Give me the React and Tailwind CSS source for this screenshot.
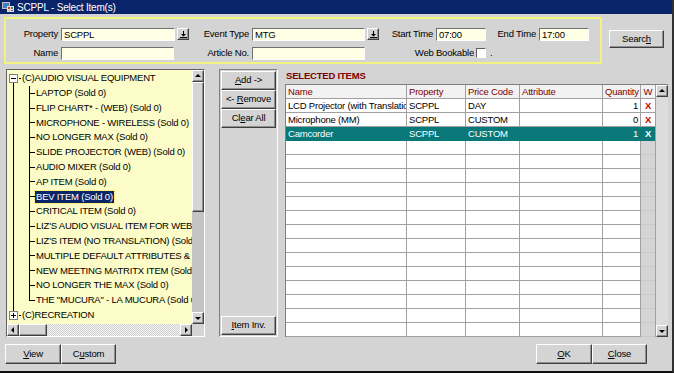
const FONT = 'font-["Liberation_Sans",Arial,sans-serif] tracking-[-0.2px]';

const children = [
  'LAPTOP (Sold 0)',
  'FLIP CHART* - (WEB) (Sold 0)',
  'MICROPHONE - WIRELESS (Sold 0)',
  'NO LONGER MAX (Sold 0)',
  'SLIDE PROJECTOR (WEB) (Sold 0)',
  'AUDIO MIXER (Sold 0)',
  'AP ITEM (Sold 0)',
  'BEV ITEM (Sold 0)',
  'CRITICAL ITEM (Sold 0)',
  "LIZ'S AUDIO VISUAL ITEM FOR WEB (Sold 0)",
  "LIZ'S ITEM (NO TRANSLATION) (Sold 0)",
  'MULTIPLE DEFAULT ATTRIBUTES & RATES (Sold 0)',
  'NEW MEETING MATRITX ITEM (Sold 0)',
  'NO LONGER THE MAX (Sold 0)',
  'THE "MUCURA" - LA MUCURA (Sold 0)',
];

const cols = [
  { key: 'name', label: 'Name', w: 'w-[121px]' },
  { key: 'prop', label: 'Property', w: 'w-[59px]' },
  { key: 'code', label: 'Price Code', w: 'w-[54px]' },
  { key: 'attr', label: 'Attribute', w: 'w-[83px]' },
  { key: 'qty', label: 'Quantity', w: 'w-[38px]', right: true },
];

const items = [
  { name: 'LCD Projector (with Translation)', prop: 'SCPPL', code: 'DAY', attr: '', qty: '1' },
  { name: 'Microphone (MM)', prop: 'SCPPL', code: 'CUSTOM', attr: '', qty: '0' },
  { name: 'Camcorder', prop: 'SCPPL', code: 'CUSTOM', attr: '', qty: '1', selected: true },
];

const raised =
  'border border-t-white border-l-white border-r-[#404040] border-b-[#404040] shadow-[inset_-1px_-1px_0_#909090] bg-[#d4d4d4]';

const Field = ({ w, value }) => (
  <div
    className={`${w} h-[13px] bg-[#ffffe6] border border-t-[#707070] border-l-[#707070] border-r-white border-b-white pl-[2px] leading-[11px] text-black whitespace-nowrap overflow-hidden`}
  >
    {value}
  </div>
);

const DropBtn = () => (
  <div className={`w-[12px] h-[12px] ${raised} flex items-center justify-center`}>
    <svg width="7" height="7" viewBox="0 0 7 7">
      <path d="M3 0h1v3h2L3.5 5.5 1 3h2z" fill="#000" />
      <rect x="0" y="6" width="7" height="1" fill="#000" />
    </svg>
  </div>
);

const Btn = ({ className = '', children }) => (
  <div className={`${raised} flex items-center justify-center text-black ${className}`}>{children}</div>
);

const Arrow = ({ dir }) => {
  const paths = {
    up: 'M1 5h6L4 2z',
    down: 'M1 3h6L4 6z',
    left: 'M5 1v6L2 4z',
    right: 'M3 1v6l3-3z',
  };
  return (
    <div className={`w-[12px] h-[12px] shrink-0 ${raised} flex items-center justify-center`}>
      <svg width="8" height="8" viewBox="0 0 8 8">
        <path d={paths[dir]} fill="#000" />
      </svg>
    </div>
  );
};

const Box = ({ open }) => (
  <div className="w-[9px] h-[9px] border border-[#808080] bg-white flex items-center justify-center shrink-0">
    <svg width="7" height="7" viewBox="0 0 7 7">
      <rect x="1" y="3" width="5" height="1" fill="#000" />
      {!open && <rect x="3" y="1" width="1" height="5" fill="#000" />}
    </svg>
  </div>
);

const Tree = () => (
  <div className="w-[199px] h-[268px] border border-t-[#606060] border-l-[#606060] border-r-white border-b-white shadow-[inset_1px_1px_0_#000] flex flex-col">
    <div className="flex flex-1 min-h-0">
      <div className="flex-1 min-w-0 bg-[#fcfcc8] overflow-hidden pl-[1px] pt-[1px]">
        <div className="flex h-[14.8px] items-stretch">
          <div className="w-[11px] flex flex-col items-center">
            <div className="flex-1" />
            <Box open />
            <div className="flex-1 w-px bg-black" />
          </div>
          <div className="w-[2px] self-center h-px bg-black" />
          <span className="pl-[1px] leading-[14.8px] whitespace-nowrap">(C)AUDIO VISUAL EQUIPMENT</span>
        </div>
        {children.map((c, i) => {
          const last = i === children.length - 1;
          return (
            <div key={c} className="flex h-[14.8px] items-stretch">
              <div className="w-[5px] shrink-0" />
              <div className="w-[16px] shrink-0 border-l border-black" />
              <div className="w-[6px] shrink-0 flex flex-col">
                <div className="flex-1 border-l border-b border-black" />
                <div className={`flex-1 ${last ? '' : 'border-l border-black'}`} />
              </div>
              <div className="flex items-center whitespace-nowrap">
                {c === 'BEV ITEM (Sold 0)' ? (
                  <span className="bg-[#0a246a] text-white px-[1px] leading-[12px] outline outline-1 outline-dotted outline-[#f0e060]">
                    {c}
                  </span>
                ) : (
                  <span className="pl-[1px]">{c}</span>
                )}
              </div>
            </div>
          );
        })}
        <div className="flex h-[14.8px] items-stretch">
          <div className="w-[11px] flex flex-col items-center">
            <div className="flex-1 w-px bg-black" />
            <Box />
            <div className="flex-1" />
          </div>
          <div className="w-[2px] self-center h-px bg-black" />
          <span className="pl-[1px] leading-[14.8px] whitespace-nowrap">(C)RECREATION</span>
        </div>
      </div>
      <div className="w-[12px] flex flex-col bg-[#c4c4c4]">
        <Arrow dir="up" />
        <div className={`h-[130px] ${raised}`} />
        <div className="flex-1" />
        <Arrow dir="down" />
      </div>
    </div>
    <div className="flex h-[12px]">
      <div className="flex-1 flex bg-[#e6e6e6] bg-[repeating-conic-gradient(#d0d0d0_0_25%,#f4f4f4_0_50%)] bg-[length:2px_2px]">
        <Arrow dir="left" />
        <div className={`w-[28px] ${raised}`} />
        <div className="flex-1" />
        <Arrow dir="right" />
      </div>
      <div className="w-[12px] bg-[#d4d4d4]" />
    </div>
  </div>
);

const Table = () => {
  const rows = [...items];
  while (rows.length < 17) rows.push(null);
  return (
    <div className="flex border-t border-l border-[#808080] h-[253px]">
      <div className="w-[369px] flex flex-col">
        <div className="flex h-[14px] bg-[#f2f2f2]">
          {cols.map((c) => (
            <div key={c.key} className={`${c.w} shrink-0 border-r border-b border-[#a0a0a0] px-[2px] text-[#800000] leading-[13px] whitespace-nowrap overflow-hidden`}>
              {c.label}
            </div>
          ))}
          <div className="w-[14px] border-b border-[#a0a0a0] text-[#800000] text-center leading-[13px]">W</div>
        </div>
        {rows.map((r, i) => (
          <div key={i} className={`flex h-[14px] ${r && r.selected ? 'bg-[#087878] text-white' : 'bg-white text-black'}`}>
            {cols.map((c) => (
              <div
                key={c.key}
                className={`${c.w} shrink-0 border-r border-b ${r && r.selected ? 'border-[#087878]' : 'border-[#a0a0a0]'} px-[2px] leading-[13px] whitespace-nowrap overflow-hidden ${c.right ? 'text-right' : ''}`}
              >
                {r ? r[c.key] : ''}
              </div>
            ))}
            <div
              className={`w-[14px] border-b ${r ? (r.selected ? 'border-[#087878] text-white' : 'border-[#a0a0a0] text-[#c00000]') : 'bg-[#d4d4d4] border-[#c8c8c8]'} text-center font-bold leading-[13px]`}
            >
              {r ? 'X' : ''}
            </div>
          </div>
        ))}
      </div>
      <div className="w-[13px] flex flex-col bg-[#dcdcdc] border-l border-[#a0a0a0]">
        <Arrow dir="up" />
        <div className="flex-1" />
        <Arrow dir="down" />
      </div>
    </div>
  );
};

export default function App() {
  return (
    <div className={`${FONT} text-[9.5px] text-black w-[674px] h-[373px] bg-[#d4d4d4] border-r-2 border-b-2 border-r-[#303030] border-b-[#101010] overflow-hidden`}>
      {/* title bar */}
      <div className="h-[14px] bg-[#0a246a] flex items-center pl-[2px] gap-[2px] text-white text-[10px]">
        <svg width="13" height="12" viewBox="0 0 13 12">
          <rect x="0" y="1" width="8" height="7" fill="#c0c0c0" />
          <rect x="1" y="2" width="6" height="5" fill="#4080c0" />
          <rect x="5" y="5" width="7" height="6" fill="#e0e0e0" />
          <rect x="6" y="6" width="2" height="2" fill="#e03030" />
          <rect x="9" y="6" width="2" height="2" fill="#30a030" />
          <rect x="6" y="9" width="2" height="1" fill="#e0c020" />
          <rect x="9" y="9" width="2" height="1" fill="#8040c0" />
        </svg>
        <span>SCPPL - Select Item(s)</span>
      </div>

      {/* filter area */}
      <div className="flex items-start mt-[3px]">
        <div className="ml-[4px] w-[598px] h-[47px] border-2 border-[#f2f280] pt-[8px] flex flex-col gap-[5px]">
          <div className="flex items-center">
            <span className="w-[52px] text-right">Property</span>
            <div className="ml-[3px]"><Field w="w-[114px]" value="SCPPL" /></div>
            <div className="ml-[2px]"><DropBtn /></div>
            <span className="w-[60px] text-right">Event Type</span>
            <div className="ml-[3px]"><Field w="w-[113px]" value="MTG" /></div>
            <div className="ml-[2px]"><DropBtn /></div>
            <span className="w-[54px] text-right">Start Time</span>
            <div className="ml-[3px]"><Field w="w-[50px]" value="07:00" /></div>
            <span className="w-[50px] text-right">End Time</span>
            <div className="ml-[3px]"><Field w="w-[50px]" value="17:00" /></div>
          </div>
          <div className="flex items-center">
            <span className="w-[52px] text-right">Name</span>
            <div className="ml-[3px]"><Field w="w-[113px]" value="" /></div>
            <span className="w-[75px] text-right">Article No.</span>
            <div className="ml-[3px]"><Field w="w-[113px]" value="" /></div>
            <span className="w-[109px] text-right">Web Bookable</span>
            <div className="ml-[2px] w-[10px] h-[10px] bg-white border border-t-[#606060] border-l-[#606060] border-r-white border-b-white" />
            <span className="ml-[4px]">.</span>
          </div>
        </div>
        <Btn className="ml-[7px] mt-[13px] w-[55px] h-[18px]">
          <span>
            Searc<span className="underline">h</span>
          </span>
        </Btn>
      </div>

      {/* main area */}
      <div className="flex mt-[5px] h-[268px]">
        <div className="ml-[6px]">
          <Tree />
        </div>
        <div className="ml-[14px] w-[59px] h-[268px] border border-t-[#808080] border-l-[#808080] border-r-white border-b-white p-[1px] flex flex-col">
          <Btn className="h-[19px]">
            <span><span className="underline">A</span>dd -&gt;</span>
          </Btn>
          <Btn className="h-[19px]">
            <span>&lt;- <span className="underline">R</span>emove</span>
          </Btn>
          <Btn className="h-[19px]">
            <span>Cl<span className="underline">e</span>ar All</span>
          </Btn>
          <div className="flex-1" />
          <Btn className="h-[19px]">
            <span><span className="underline">I</span>tem Inv.</span>
          </Btn>
        </div>
        <div className="ml-[7px] flex flex-col">
          <div className="h-[15px] pl-[1px] font-bold text-[#800000] leading-[13px]">SELECTED ITEMS</div>
          <Table />
        </div>
      </div>

      {/* bottom buttons */}
      <div className="flex mt-[7px] px-[5px]">
        <Btn className="w-[56px] h-[20px]">
          <span><span className="underline">V</span>iew</span>
        </Btn>
        <Btn className="w-[55px] h-[20px]">
          <span>C<span className="underline">u</span>stom</span>
        </Btn>
        <div className="flex-1" />
        <Btn className="w-[56px] h-[20px]">
          <span><span className="underline">O</span>K</span>
        </Btn>
        <Btn className="w-[55px] h-[20px] mr-[20px]">
          <span><span className="underline">C</span>lose</span>
        </Btn>
      </div>
    </div>
  );
}
